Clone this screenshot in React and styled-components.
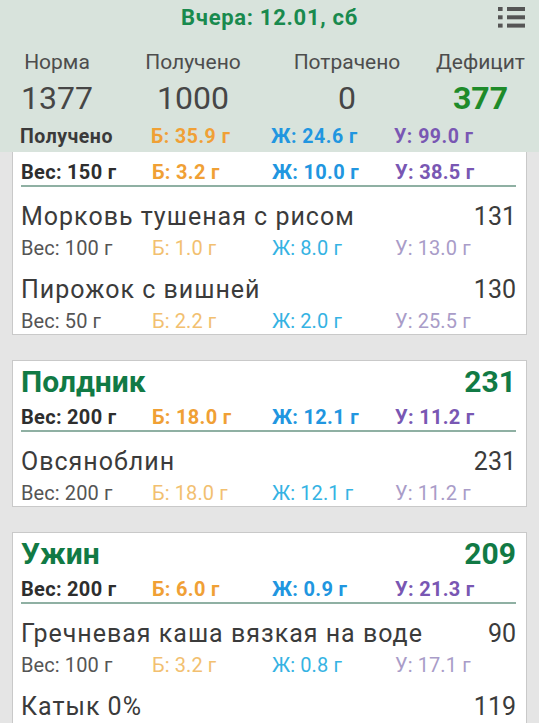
import React from "react";
import styled, { createGlobalStyle } from "styled-components";

//Styling//
const GlobalStyle = createGlobalStyle`
  html, body {
    margin: 0;
    padding: 0;
    background: #e5e5e5;
  }
  * {
    box-sizing: border-box;
  }
`;

const Screen = styled.div`
  width: 539px;
  height: 723px;
  overflow: hidden;
  display: flex;
  flex-direction: column;
  background: #e5e5e5;
  font-family: Roboto, "Noto Sans", sans-serif;
`;

const Header = styled.header`
  background: #d8e3dc;
  padding-bottom: 4px;
  flex-shrink: 0;
`;

const TitleBar = styled.div`
  display: grid;
  grid-template-columns: 1fr auto 1fr;
  height: 36px;
`;

const Title = styled.h1`
  grid-column: 2;
  margin: 0;
  font-size: 22px;
  line-height: 36px;
  font-weight: 700;
  letter-spacing: 0.7px;
  color: #198a4e;
`;

const MenuButton = styled.button`
  grid-column: 3;
  justify-self: end;
  align-self: start;
  margin: 7px 14px 0 0;
  padding: 0;
  border: none;
  background: none;
  display: flex;
`;

const Stats = styled.div`
  display: grid;
  grid-template-columns: 114px 158px 150px 1fr;
  margin-top: 14px;
  text-align: center;
`;

const StatLabel = styled.div`
  font-size: 21px;
  line-height: 24px;
  color: #4d4d4d;
`;

const StatValue = styled.div`
  margin-top: 3px;
  font-size: 32px;
  line-height: 42px;
  color: ${(p) => (p.$accent ? "#1e8b2a" : "#464646")};
  font-weight: ${(p) => (p.$accent ? 700 : 400)};
`;

const MacroRow = styled.div`
  display: grid;
  grid-template-columns: 131px 120px 123px 1fr;
  font-size: ${(p) => p.$size}px;
  line-height: ${(p) => p.$line}px;
  font-weight: ${(p) => (p.$bold ? 700 : 400)};
  letter-spacing: ${(p) => (p.$bold ? "0.3px" : "0.1px")};
  white-space: nowrap;
`;

const HeaderMacros = styled(MacroRow)`
  margin-top: 7px;
  padding-left: 20px;
  letter-spacing: 0.5px;
`;

const Macro = styled.span`
  color: ${(p) => p.$color};
`;

const List = styled.div`
  flex: 1;
  overflow: hidden;
  display: flex;
  flex-direction: column;
  gap: 25px;
  padding: 0 12px;
`;

const Card = styled.section`
  flex-shrink: 0;
  background: #fff;
  border: 1px solid #c9c9c9;
  border-top: ${(p) => (p.$clipped ? "none" : "1px solid #c9c9c9")};
  padding: ${(p) => (p.$clipped ? "8px" : "4px")} 10px 1px 8px;
`;

const MealHead = styled.div`
  display: flex;
  justify-content: space-between;
  margin-bottom: 6px;
  font-size: 30px;
  line-height: 34px;
  font-weight: 700;
  color: #117a45;
`;

const Summary = styled(MacroRow)`
  padding-bottom: 1px;
  border-bottom: 2px solid #8fb0a3;
`;

const Item = styled.div`
  padding-top: 15px;
`;

const ItemHead = styled.div`
  display: flex;
  justify-content: space-between;
  font-size: 25px;
  line-height: 30px;
  color: #3b3b3b;
`;

const ItemName = styled.span`
  letter-spacing: 1px;
`;

const ItemMacros = styled(MacroRow)`
  margin-top: 4px;
`;

const bold = { w: "#2e2e2e", b: "#f0a035", f: "#2196e0", c: "#7957b3" };
const light = { w: "#555555", b: "#f2c070", f: "#35b3e3", c: "#a99cc8" };

const meals = [
  {
    clipped: true,
    total: { w: 150, b: 3.2, f: 10.0, c: 38.5 },
    items: [
      { name: "Морковь тушеная с рисом", kcal: 131, w: 100, b: 1.0, f: 8.0, c: 13.0 },
      { name: "Пирожок с вишней", kcal: 130, w: 50, b: 2.2, f: 2.0, c: 25.5 },
    ],
  },
  {
    title: "Полдник",
    kcal: 231,
    total: { w: 200, b: 18.0, f: 12.1, c: 11.2 },
    items: [{ name: "Овсяноблин", kcal: 231, w: 200, b: 18.0, f: 12.1, c: 11.2 }],
  },
  {
    title: "Ужин",
    kcal: 209,
    total: { w: 200, b: 6.0, f: 0.9, c: 21.3 },
    items: [
      { name: "Гречневая каша вязкая на воде", kcal: 90, w: 100, b: 3.2, f: 0.8, c: 17.1 },
      { name: "Катык 0%", kcal: 119, w: 100, b: 2.8, f: 0.1, c: 4.2 },
    ],
  },
];

const MenuIcon = () => (
  <svg width="27" height="21" viewBox="0 0 27 21">
    <g fill="#555">
      <rect x="0" y="0" width="4.6" height="4" />
      <rect x="0" y="8.3" width="4.6" height="4" />
      <rect x="0" y="16.6" width="4.6" height="4" />
      <rect x="9" y="0" width="18" height="4" />
      <rect x="9" y="8.3" width="18" height="4" />
      <rect x="9" y="16.6" width="18" height="4" />
    </g>
  </svg>
);

const Macros = ({ as: Row, data, colors, bold: isBold, size, line, first }) => (
  <Row $bold={isBold} $size={size} $line={line}>
    <Macro $color={colors.w}>{first || `Вес: ${data.w} г`}</Macro>
    <Macro $color={colors.b}>Б: {data.b.toFixed(1)} г</Macro>
    <Macro $color={colors.f}>Ж: {data.f.toFixed(1)} г</Macro>
    <Macro $color={colors.c}>У: {data.c.toFixed(1)} г</Macro>
  </Row>
);

const MealCard = ({ meal }) => (
  <Card $clipped={meal.clipped}>
    {meal.title && (
      <MealHead>
        <span>{meal.title}</span>
        <span>{meal.kcal}</span>
      </MealHead>
    )}
    <Macros as={Summary} data={meal.total} colors={bold} bold size={20} line={24} />
    {meal.items.map((item) => (
      <Item key={item.name}>
        <ItemHead>
          <ItemName>{item.name}</ItemName>
          <span>{item.kcal}</span>
        </ItemHead>
        <Macros as={ItemMacros} data={item} colors={light} size={20} line={24} />
      </Item>
    ))}
  </Card>
);

export default function App() {
  return (
    <Screen>
      <GlobalStyle />
      <Header>
        <TitleBar>
          <Title>Вчера: 12.01, сб</Title>
          <MenuButton aria-label="Меню">
            <MenuIcon />
          </MenuButton>
        </TitleBar>
        <Stats>
          <div>
            <StatLabel>Норма</StatLabel>
            <StatValue>1377</StatValue>
          </div>
          <div>
            <StatLabel>Получено</StatLabel>
            <StatValue>1000</StatValue>
          </div>
          <div>
            <StatLabel>Потрачено</StatLabel>
            <StatValue>0</StatValue>
          </div>
          <div>
            <StatLabel>Дефицит</StatLabel>
            <StatValue $accent>377</StatValue>
          </div>
        </Stats>
        <Macros
          as={HeaderMacros}
          data={{ b: 35.9, f: 24.6, c: 99.0 }}
          colors={{ ...bold, w: "#3a3a3a" }}
          bold
          size={19.5}
          line={22}
          first="Получено"
        />
      </Header>
      <List>
        {meals.map((meal, i) => (
          <MealCard key={i} meal={meal} />
        ))}
      </List>
    </Screen>
  );
}
